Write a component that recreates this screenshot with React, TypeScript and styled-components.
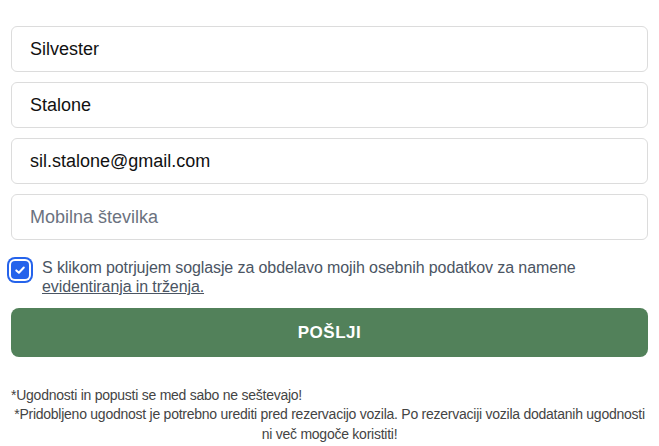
import React, { useState } from "react";
import styled, { createGlobalStyle } from "styled-components";

const Global = createGlobalStyle`
  html, body { margin: 0; padding: 0; background: #ffffff; }
  body { font-family: "Liberation Sans", Arial, sans-serif; }
  * { box-sizing: border-box; }
`;

const Page = styled.div`
  width: 659px;
  height: 446px;
  overflow: hidden;
  padding: 26px 11px 0 11px;
`;

const Form = styled.form`
  display: flex;
  flex-direction: column;
  gap: 10px;
`;

const Input = styled.input`
  width: 100%;
  height: 46px;
  border: 1px solid #dcdcdc;
  border-radius: 6px;
  padding: 0 18px;
  font-family: "Liberation Sans", Arial, sans-serif;
  font-size: 18px;
  color: #111;
  background: #fff;
  outline: none;
  &::placeholder { color: #6b7280; }
`;

const ConsentRow = styled.label`
  display: flex;
  align-items: flex-start;
  gap: 13px;
  margin-top: 8px;
  cursor: pointer;
`;

const Box = styled.span`
  flex: none;
  width: 18px;
  height: 18px;
  margin-top: 3px;
  border-radius: 4px;
  background: #2563eb;
  box-shadow: 0 0 0 2px #fff, 0 0 0 4px #2563eb;
  display: flex;
  align-items: center;
  justify-content: center;
`;

const ConsentText = styled.span`
  font-size: 16px;
  line-height: 19px;
  letter-spacing: -0.1px;
  color: #4b5563;
`;

const Link = styled.a`
  color: #4b5563;
  text-decoration: underline;
`;

const Submit = styled.button`
  margin-top: 2px;
  height: 49px;
  width: 100%;
  border: none;
  border-radius: 8px;
  background: #52815a;
  color: #fff;
  font-family: "Liberation Sans", Arial, sans-serif;
  font-weight: 700;
  font-size: 17px;
  letter-spacing: 0.5px;
  cursor: pointer;
`;

const Notes = styled.div`
  margin-top: 29px;
  font-size: 14px;
  letter-spacing: -0.25px;
  color: #444;
`;

const NoteLeft = styled.p`
  margin: 0;
  line-height: 18px;
`;

const NoteCenter = styled.p`
  margin: 0;
  line-height: 20px;
  text-align: center;
`;

export default function App() {
  const [checked, setChecked] = useState(true);
  return (
    <Page>
      <Global />
      <Form onSubmit={(e) => e.preventDefault()}>
        <Input defaultValue="Silvester" />
        <Input defaultValue="Stalone" />
        <Input defaultValue="sil.stalone@gmail.com" />
        <Input placeholder="Mobilna številka" />
        <ConsentRow onClick={() => setChecked(!checked)}>
          <Box>
            {checked && (
              <svg width="12" height="12" viewBox="0 0 12 12" fill="none">
                <path d="M2.3 6.4 L4.9 8.8 L9.8 3.5" stroke="#fff" strokeWidth="2" strokeLinecap="round" strokeLinejoin="round" />
              </svg>
            )}
          </Box>
          <ConsentText>
            S klikom potrjujem soglasje za obdelavo mojih osebnih podatkov za namene{" "}
            <Link href="#">evidentiranja in trženja.</Link>
          </ConsentText>
        </ConsentRow>
        <Submit type="submit">POŠLJI</Submit>
      </Form>
      <Notes>
        <NoteLeft>*Ugodnosti in popusti se med sabo ne seštevajo!</NoteLeft>
        <NoteCenter>
          *Pridobljeno ugodnost je potrebno urediti pred rezervacijo vozila. Po rezervaciji vozila dodatanih ugodnosti ni več mogoče koristiti!
        </NoteCenter>
      </Notes>
    </Page>
  );
}
